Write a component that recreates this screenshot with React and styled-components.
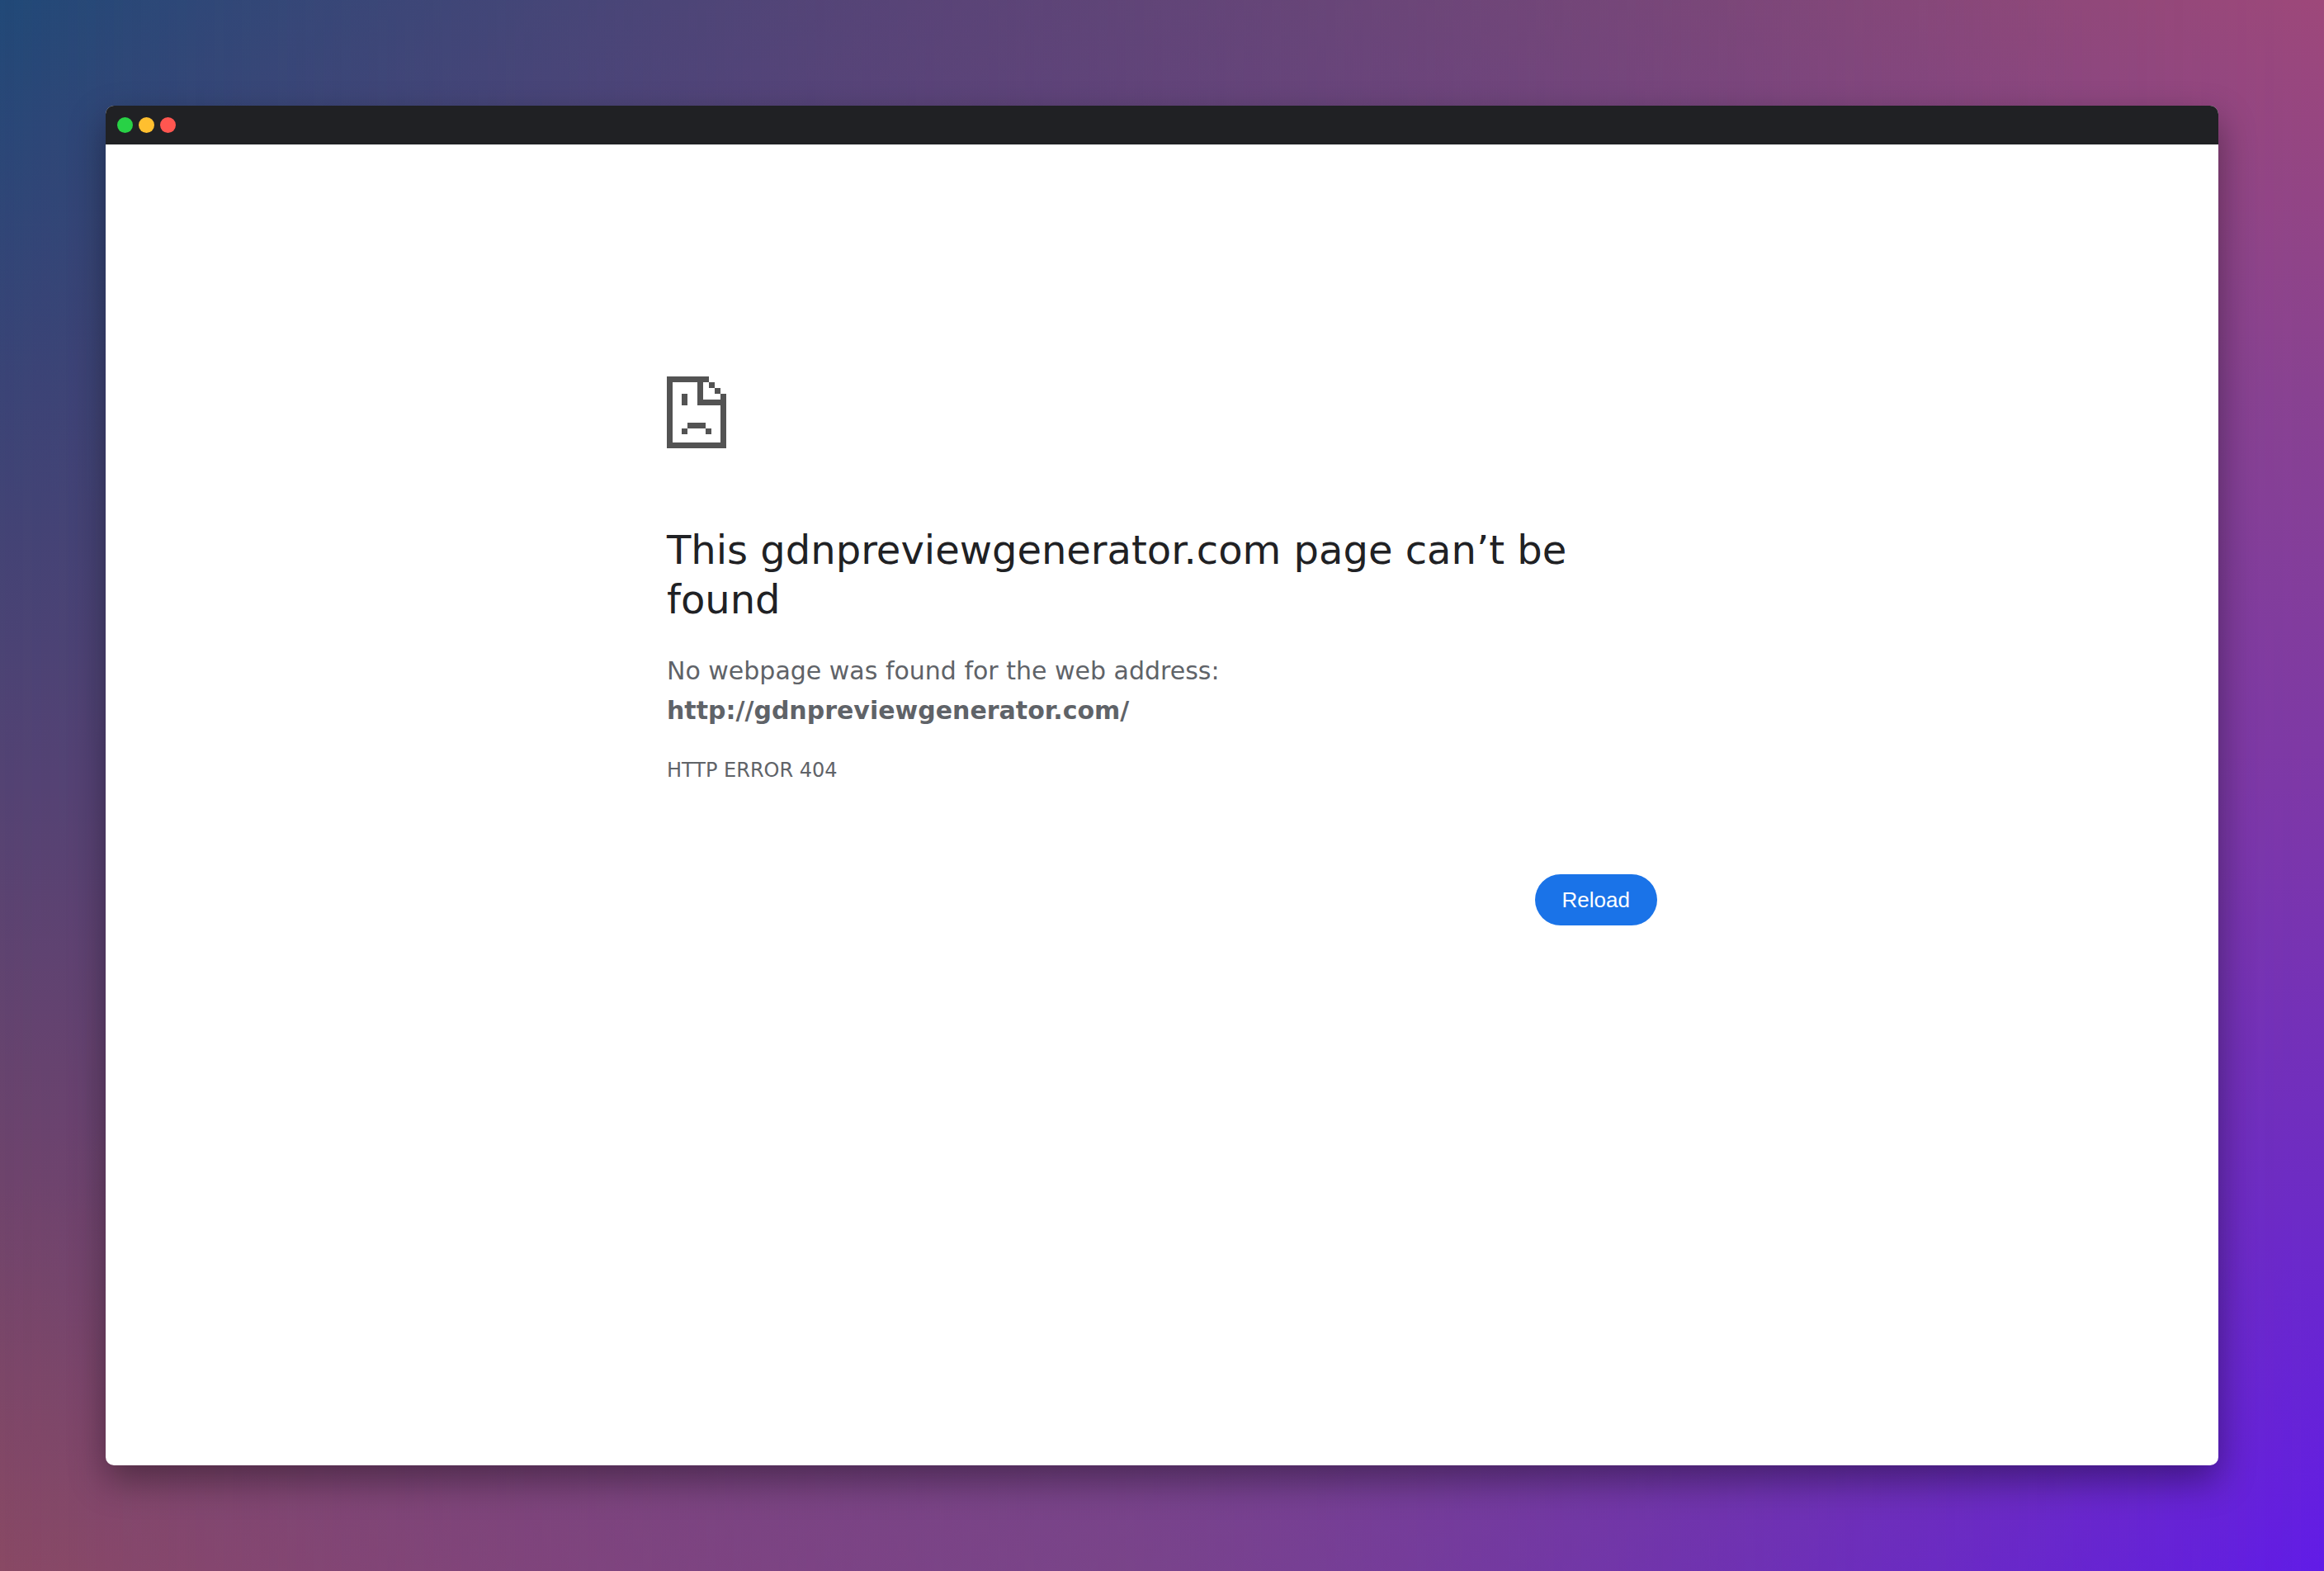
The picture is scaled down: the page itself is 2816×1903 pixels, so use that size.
import React from "react";
import styled, { createGlobalStyle } from "styled-components";

const GlobalStyle = createGlobalStyle`
  * { box-sizing: border-box; }
  body { margin: 0; }
`;

const Backdrop = styled.div`
  position: relative;
  isolation: isolate;
  display: flex;
  min-height: 100vh;
  padding: 128px;
  background: linear-gradient(
    180deg,
    #1c4a78 0%,
    #3a4476 25%,
    #544373 50%,
    #6e446c 75%,
    #8a4864 100%
  );

  /* Warm-to-violet column that fades in from left to right. */
  &::before {
    content: "";
    position: absolute;
    inset: 0;
    z-index: -2;
    background: linear-gradient(
      180deg,
      #9e487a 0%,
      #8a4292 25%,
      #7e38a8 50%,
      #6e2cc4 75%,
      #601aeb 100%
    );
    mask-image: linear-gradient(90deg, transparent, #000000);
  }

  /* Muted tint along the top and bottom edges. */
  &::after {
    content: "";
    position: absolute;
    inset: 0;
    z-index: -1;
    background:
      radial-gradient(ellipse 55% 50% at 48% 100%, rgba(126, 90, 104, 0.45), rgba(126, 90, 104, 0)),
      radial-gradient(ellipse 50% 50% at 40% 0%, rgba(112, 56, 116, 0.3), rgba(112, 56, 116, 0));
  }
`;

const Window = styled.div`
  display: flex;
  flex: 1;
  flex-direction: column;
  overflow: hidden;
  border-radius: 10px;
  background: #ffffff;
  box-shadow: 0 18px 44px rgba(0, 0, 0, 0.38);
`;

const TitleBar = styled.header`
  display: flex;
  gap: 7px;
  padding: 14px;
  background: #202124;
`;

const WindowButton = styled.button`
  width: 19px;
  height: 19px;
  padding: 0;
  border: 0;
  border-radius: 50%;
  background: ${({ $color }) => $color};
`;

const ErrorPage = styled.main`
  display: flex;
  flex-direction: column;
  width: 100%;
  max-width: 1200px;
  margin: 0 auto;
  padding-top: 281px;
  color: #5f6368;
  font-family: "DejaVu Sans", sans-serif;
  font-size: 30px;
  line-height: 48px;
`;

const SadPage = styled.svg`
  width: 72px;
  height: 87px;
  margin-bottom: 93px;
  fill: #535353;
`;

const Title = styled.h1`
  margin: 0 0 33px;
  color: #202124;
  font-size: 48px;
  font-weight: 400;
  line-height: 60px;
`;

const Message = styled.p`
  margin: 0 0 24px;
`;

const Address = styled.strong`
  display: block;
  font-weight: 700;
`;

const ErrorCode = styled.p`
  margin: 0;
  font-size: 24px;
`;

const Actions = styled.div`
  display: flex;
  justify-content: flex-end;
  margin-top: 102px;
`;

const ReloadButton = styled.button`
  padding: 16px 33px;
  border: 0;
  border-radius: 31px;
  background: #1a73e8;
  color: #ffffff;
  font-family: "Liberation Sans", Arial, sans-serif;
  font-size: 26px;
  line-height: 30px;
`;

export default function App() {
  return (
    <>
      <GlobalStyle />
      <Backdrop>
        <Window>
          <TitleBar>
            <WindowButton type="button" $color="#28d146" aria-label="Zoom" />
            <WindowButton type="button" $color="#ffbf2f" aria-label="Minimize" />
            <WindowButton type="button" $color="#ff5650" aria-label="Close" />
          </TitleBar>
          <ErrorPage>
            <SadPage viewBox="0 0 72 87" shapeRendering="crispEdges" aria-hidden="true">
              <path d="M0 0H51V7H44V28H65V21H72V87H0ZM7 7V80H65V35H37V7Z" fillRule="evenodd" />
              <path d="M51 7H58V14H51ZM58 14H65V21H58Z" />
              <path d="M18 21H25V35H18ZM25 56H47V63H25ZM18 63H25V70H18ZM47 63H54V70H47Z" />
            </SadPage>
            <Title>This gdnpreviewgenerator.com page can’t be found</Title>
            <Message>
              No webpage was found for the web address:
              <Address>http://gdnpreviewgenerator.com/</Address>
            </Message>
            <ErrorCode>HTTP ERROR 404</ErrorCode>
            <Actions>
              <ReloadButton type="button">Reload</ReloadButton>
            </Actions>
          </ErrorPage>
        </Window>
      </Backdrop>
    </>
  );
}
